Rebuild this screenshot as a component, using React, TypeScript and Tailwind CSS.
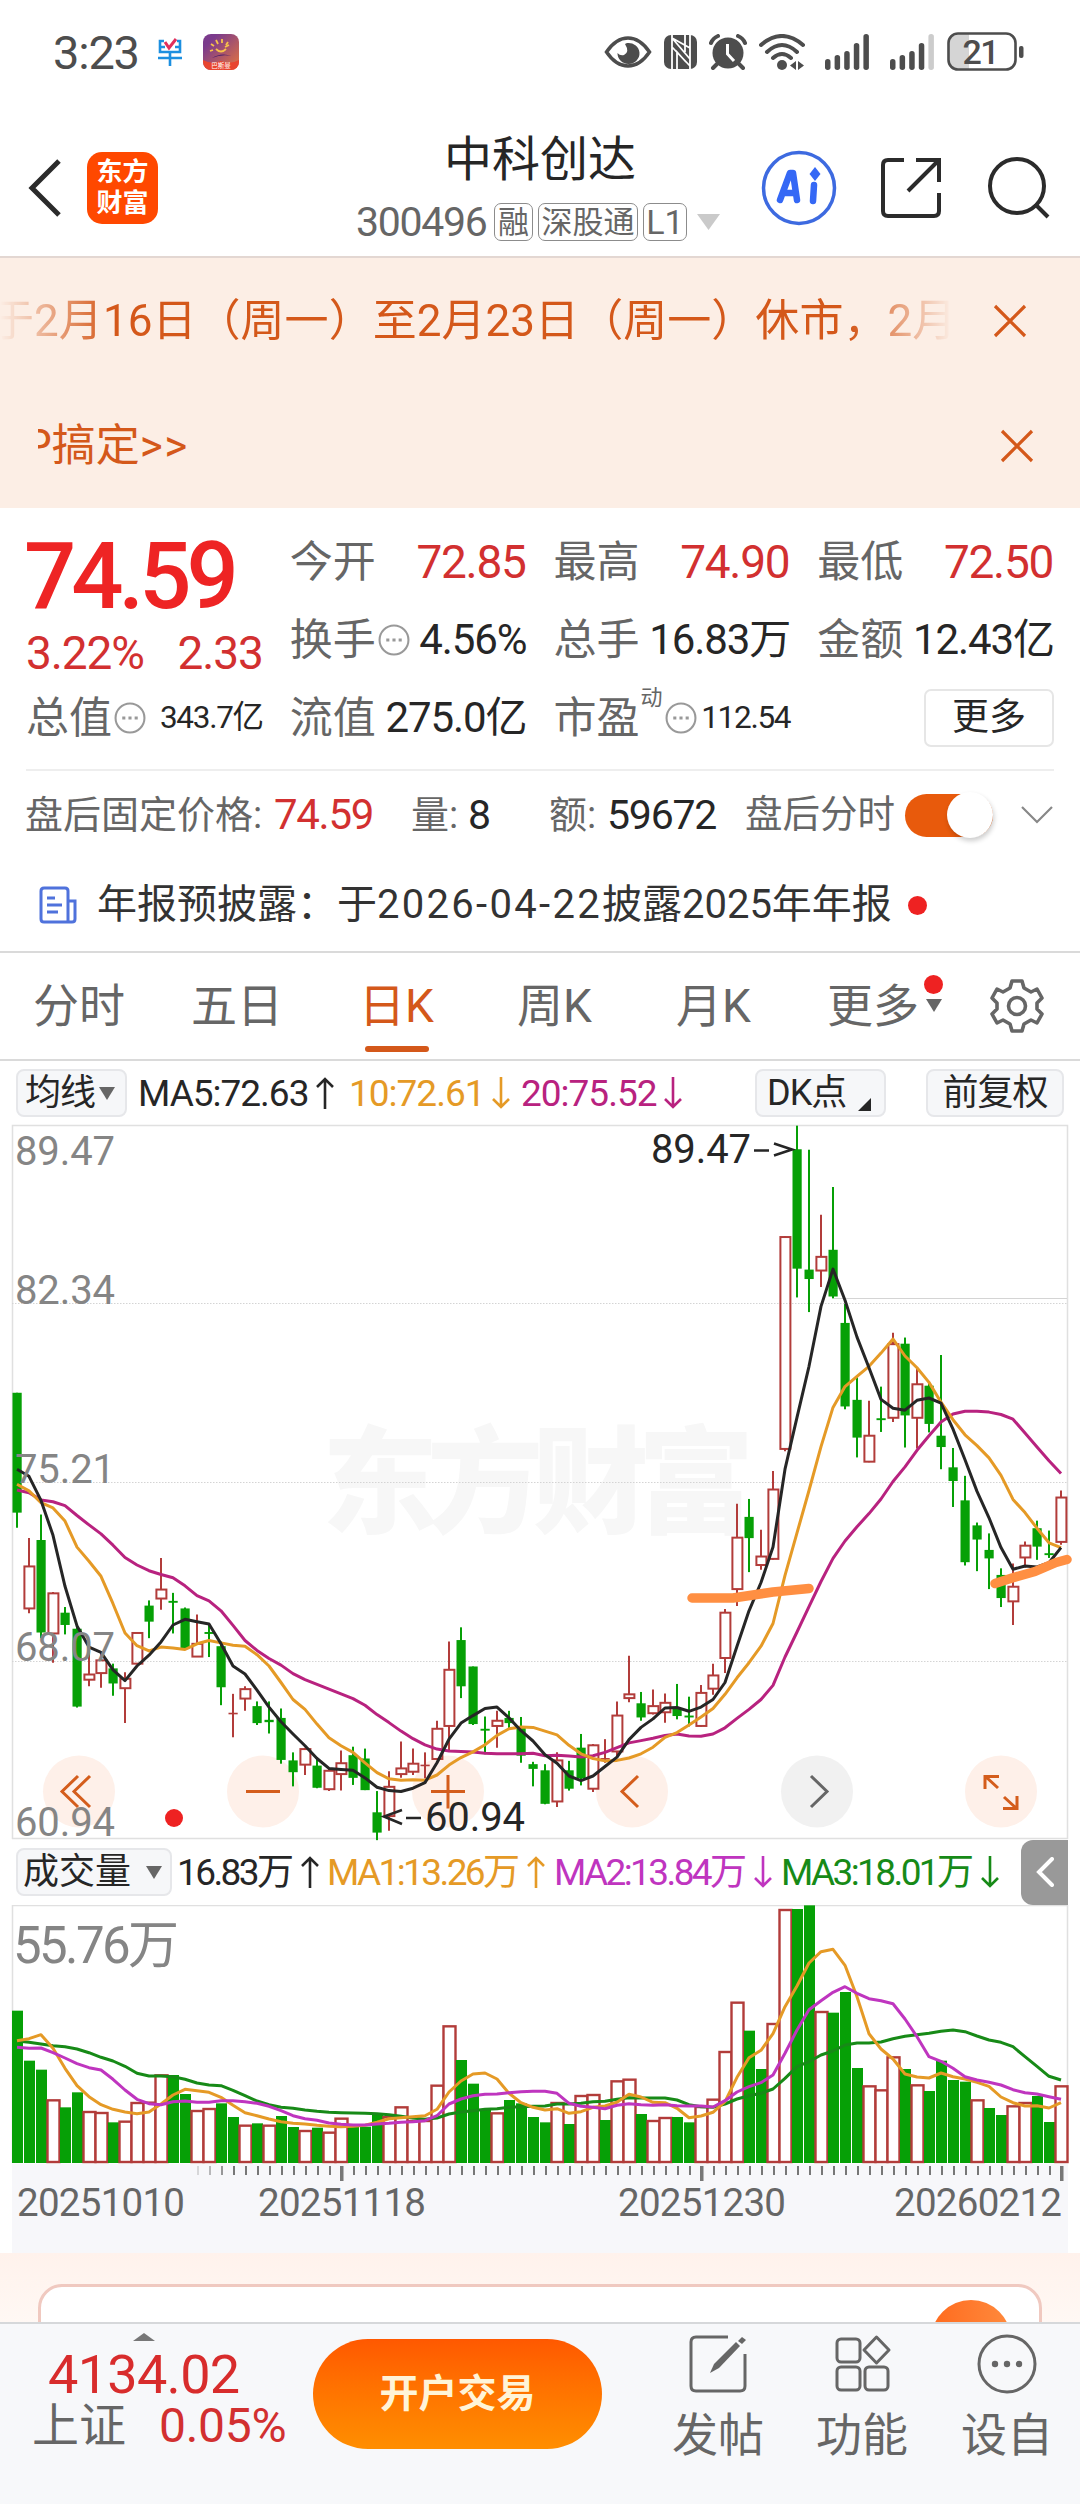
import { ReactNode } from 'react';
import clsx from 'clsx';

type Candle = [kind: 'r' | 'g', high: number, top: number, bottom: number, low: number];

const UP = '#b23c3a';
const DOWN = '#06a006';

// Daily candles, 12px apart, in chart units (see priceY)
const candles: Candle[] = [
	['g', 578, 578, 832, 864], ['r', 886, 946, 1035, 1045], ['g', 836, 890, 1086, 1098], ['r', 1000, 1003, 1088, 1150],
	['g', 1032, 1044, 1070, 1090], ['g', 1070, 1078, 1243, 1245], ['r', 1118, 1175, 1186, 1200], ['r', 1130, 1145, 1172, 1203],
	['g', 1152, 1162, 1194, 1220], ['r', 1170, 1184, 1204, 1278], ['r', 1085, 1087, 1152, 1154], ['g', 1018, 1029, 1063, 1098],
	['r', 928, 995, 1014, 1038], ['g', 1002, 1019, 1023, 1088], ['g', 1033, 1035, 1120, 1122], ['r', 1048, 1110, 1137, 1138],
	['g', 1070, 1085, 1089, 1138], ['g', 1105, 1115, 1202, 1240], ['r', 1216, 1256, 1257, 1308], ['r', 1200, 1206, 1226, 1252],
	['g', 1232, 1242, 1278, 1282], ['g', 1232, 1271, 1276, 1300], ['g', 1247, 1267, 1356, 1364], ['g', 1340, 1357, 1382, 1412],
	['r', 1330, 1333, 1366, 1388], ['g', 1350, 1368, 1415, 1416], ['r', 1375, 1379, 1418, 1422], ['r', 1336, 1363, 1386, 1421],
	['g', 1328, 1346, 1394, 1409], ['g', 1332, 1353, 1420, 1420], ['g', 1422, 1467, 1510, 1526], ['r', 1380, 1413, 1475, 1506],
	['r', 1317, 1374, 1386, 1394], ['r', 1332, 1364, 1381, 1388], ['r', 1340, 1366, 1368, 1395], ['r', 1273, 1290, 1354, 1355],
	['r', 1105, 1165, 1284, 1336], ['g', 1075, 1102, 1200, 1225], ['g', 1158, 1158, 1280, 1282], ['g', 1264, 1290, 1294, 1344],
	['r', 1252, 1273, 1284, 1330], ['g', 1252, 1267, 1278, 1290], ['g', 1265, 1286, 1347, 1362], ['g', 1360, 1365, 1375, 1412],
	['g', 1365, 1378, 1449, 1450], ['r', 1340, 1357, 1444, 1456], ['g', 1358, 1378, 1417, 1421], ['g', 1301, 1330, 1395, 1410],
	['r', 1322, 1325, 1417, 1424], ['r', 1312, 1352, 1354, 1362], ['r', 1232, 1262, 1338, 1350], ['r', 1135, 1217, 1225, 1234],
	['g', 1212, 1236, 1266, 1273], ['r', 1207, 1242, 1257, 1260], ['r', 1215, 1235, 1255, 1277], ['g', 1195, 1248, 1263, 1270],
	['g', 1222, 1262, 1266, 1285], ['r', 1197, 1214, 1284, 1286], ['r', 1152, 1177, 1205, 1218], ['r', 1036, 1044, 1140, 1172],
	['r', 813, 885, 994, 1030], ['g', 803, 841, 886, 958], ['r', 868, 925, 943, 953], ['r', 744, 783, 930, 932],
	['r', 246, 248, 697, 702], ['g', 12, 62, 315, 376], ['g', 63, 317, 337, 407], ['r', 201, 290, 319, 354],
	['g', 142, 275, 374, 378], ['g', 390, 430, 607, 613], ['g', 545, 593, 673, 715], ['r', 595, 669, 724, 725],
	['g', 565, 632, 636, 661], ['r', 451, 475, 631, 640], ['g', 461, 474, 626, 694], ['r', 526, 560, 631, 696],
	['g', 555, 563, 644, 662], ['g', 498, 669, 693, 740], ['g', 695, 736, 765, 820], ['g', 754, 806, 937, 944],
	['g', 853, 859, 889, 956], ['g', 876, 911, 929, 994], ['g', 950, 964, 1013, 1032], ['r', 940, 989, 1020, 1070],
	['r', 893, 902, 927, 948], ['g', 849, 865, 904, 932], ['g', 870, 918, 922, 928], ['r', 785, 800, 894, 900],
];

const ma5 = [
	740, 755, 806, 880, 988, 1072, 1117, 1128, 1165, 1188, 1157, 1134, 1106, 1070, 1058, 1063, 1068, 1110, 1157, 1174, 1208, 1244,
	1275, 1301, 1326, 1353, 1374, 1376, 1378, 1394, 1414, 1421, 1423, 1416, 1404, 1362, 1312, 1278, 1262, 1247, 1244, 1267, 1294,
	1316, 1345, 1363, 1390, 1400, 1390, 1370, 1350, 1313, 1287, 1269, 1246, 1245, 1253, 1244, 1228, 1192, 1115, 1040, 980, 905,
	740, 630, 522, 395, 316, 382, 460, 525, 592, 611, 615, 594, 589, 600, 655, 720, 787, 843, 906, 952, 945, 947, 938, 906,
];
const ma10 = [
	772, 786, 811, 822, 850, 905, 935, 967, 1025, 1087, 1114, 1125, 1117, 1119, 1122, 1110, 1103, 1108, 1113, 1115, 1133, 1157,
	1192, 1228, 1249, 1280, 1309, 1326, 1340, 1362, 1383, 1396, 1399, 1398, 1399, 1388, 1367, 1351, 1339, 1324, 1304, 1290, 1286,
	1287, 1295, 1303, 1325, 1343, 1353, 1358, 1357, 1352, 1343, 1329, 1308, 1298, 1282, 1265, 1247, 1217, 1182, 1150, 1115, 1067,
	965, 875, 785, 692, 609, 565, 543, 522, 494, 464, 500, 525, 556, 598, 635, 667, 690, 716, 753, 804, 832, 865, 896, 906,
];
const ma20 = [
	784, 790, 805, 809, 817, 838, 858, 877, 901, 927, 943, 955, 963, 970, 987, 1008, 1019, 1040, 1071, 1103, 1124, 1141, 1155,
	1173, 1186, 1196, 1206, 1216, 1226, 1240, 1260, 1277, 1295, 1311, 1324, 1333, 1337, 1338, 1339, 1342, 1343, 1343, 1343, 1342,
	1347, 1346, 1348, 1350, 1347, 1340, 1330, 1320, 1315, 1310, 1304, 1301, 1305, 1306, 1301, 1288, 1268, 1249, 1228, 1198, 1138,
	1085, 1031, 978, 929, 892, 862, 834, 803, 766, 735, 700, 669, 640, 623, 617, 617, 619, 624, 634, 663, 693, 722, 749,
];

const volumes =
	'g542 g692 g719 r808 g832 g787 r843 r846 g877 r872 r816 r815 r733 g735 g792 r840 r834 g820 g861 r884 g880 r884 g858 g891 r900 g893 r905 r863 g890 g890 g852 r858 r829 r870 r870 r764 r586 g690 g761 g839 r847 g810 g820 g861 g877 r816 g882 r795 r792 g870 r751 r746 g852 r870 r861 g861 g877 r828 r806 r663 r515 g602 g717 r579 r237 g237 g226 r543 g548 g486 g714 r766 r778 r679 g717 r763 g783 g692 g750 g755 r808 g834 g855 r826 r816 g798 g876 r766'.split(
		' '
	);
const vol5 = [
	632, 626, 614, 655, 715, 767, 800, 824, 838, 846, 851, 846, 822, 795, 778, 782, 787, 802, 826, 848, 857, 867, 875, 880, 882, 886,
	889, 890, 889, 886, 877, 866, 863, 860, 857, 838, 786, 753, 732, 729, 747, 790, 818, 832, 840, 836, 850, 845, 832, 828, 817, 793,
	801, 817, 818, 835, 863, 858, 847, 815, 742, 683, 661, 611, 530, 468, 399, 365, 358, 406, 500, 611, 657, 687, 732, 741, 744, 729,
	740, 747, 757, 769, 801, 818, 828, 827, 834, 818,
];
const vol10 = [
	652, 655, 654, 668, 684, 701, 713, 720, 748, 780, 808, 821, 824, 815, 813, 817, 817, 812, 812, 815, 820, 829, 842, 857, 866, 871,
	879, 883, 885, 885, 882, 880, 877, 875, 872, 857, 822, 807, 797, 793, 792, 788, 785, 784, 784, 790, 820, 829, 832, 836, 826, 821,
	824, 826, 824, 827, 828, 828, 831, 812, 786, 770, 758, 735, 670, 600, 539, 512, 487, 470, 490, 506, 512, 521, 567, 620, 680, 694,
	715, 740, 750, 757, 765, 779, 788, 792, 800, 808,
];
const vol20 = [
	633, 637, 642, 647, 650, 657, 668, 682, 693, 709, 730, 738, 738, 740, 748, 759, 765, 767, 781, 797, 813, 824, 832, 835, 840, 844,
	847, 848, 849, 850, 851, 854, 859, 864, 868, 864, 852, 846, 842, 838, 836, 832, 830, 829, 828, 822, 822, 820, 815, 814, 808, 803,
	804, 804, 804, 810, 824, 830, 832, 822, 807, 797, 790, 777, 745, 710, 695, 675, 663, 645, 639, 639, 636, 626, 619, 614, 610, 604,
	600, 605, 618, 630, 637, 650, 680, 709, 739, 750,
];

const slotX = (i: number) => 17 + i * 12;
const priceY = (v: number) => v / 2.119 - 4;
const volY = (v: number) => v / 3 - 75;
const toPoints = (values: number[], y: (v: number) => number) =>
	values.map((v, i) => `${slotX(i)},${y(v).toFixed(1)}`).join(' ');

const Line = ({ values, y, color }: { values: number[]; y: (v: number) => number; color: string }) => (
	<polyline points={toPoints(values, y)} fill="none" stroke={color} strokeWidth={3} strokeLinejoin="round" />
);

const CandleShape = ({ index, candle }: { index: number; candle: Candle }) => {
	const [kind, high, top, bottom, low] = candle;
	const x = slotX(index);
	const color = kind === 'r' ? UP : DOWN;
	const y1 = priceY(top);
	const y2 = priceY(bottom);
	const height = Math.max(y2 - y1, 1.6);

	if (kind === 'g' || height < 2) {
		return (
			<g fill={color}>
				<rect x={x - 1} y={priceY(high)} width={2} height={priceY(low) - priceY(high)} />
				<rect x={x - 4.5} y={y1} width={9.2} height={height} />
			</g>
		);
	}

	return (
		<g>
			<path d={`M${x} ${priceY(high)}V${y1}M${x} ${y2}V${priceY(low)}`} stroke={color} strokeWidth={2} />
			<rect x={x - 4.6} y={y1} width={10} height={height} fill="none" stroke={color} strokeWidth={2} />
		</g>
	);
};

const AxisLabel = ({ y, children }: { y: number; children: string }) => (
	<text x={15} y={y} fontSize={40} fill="#858585" textLength={100}>
		{children}
	</text>
);

const PriceChart = () => (
	<svg width={1080} height={714} viewBox="0 1 1080 714" className="block overflow-visible">
		<text
			x={322}
			y={400}
			fontSize={116}
			fontWeight={900}
			fill="#f7f7f7"
			textLength={432}
			className="font-['Noto_Sans_CJK_SC',sans-serif]"
		>
			东方财富
		</text>
		<path d="M12.5 715V1.5H1067.5V715" fill="none" stroke="#e0e0e0" strokeWidth={1.5} />
		<path d="M12 714.5H1068" stroke="#e0e0e0" strokeWidth={1.5} />
		<path d="M12 179.5H1067M12 358.5H1067M12 537.5H1067" stroke="#d4d4d4" strokeDasharray="1.5 1.5" />
		<path d="M834 174.5H1067" stroke="#d4d4d4" />

		{[79, 263, 448, 632, 1001].map((cx) => (
			<circle key={cx} cx={cx} cy={667.5} r={36} fill="#fef0e9" />
		))}
		<circle cx={817} cy={667.5} r={36} fill="#f1f1f1" />

		{candles.map((candle, i) => (
			<CandleShape key={i} index={i} candle={candle} />
		))}
		<Line values={ma20} y={priceY} color="#b8227f" />
		<Line values={ma10} y={priceY} color="#e59a26" />
		<Line values={ma5} y={priceY} color="#262626" />

		<g fill="none" stroke="#ff8f42" strokeWidth={9.5} strokeLinecap="round" strokeLinejoin="round">
			<path d="M692 474H733L773 468L809 464.5" />
			<path d="M995 459.5L1012 454L1035 447.5L1056 438.5L1067 435.5" />
		</g>

		<g fill="none" stroke="#d45d1c" strokeWidth={3}>
			<path d="M78 652L62 667.5L78 683M90 652L74 667.5L90 683" />
			<path d="M246 667.5H280M431 667.5H465M448 651V684.5M638 652L622 667.5L638 683" />
			<path d="M985 665V652.5H999M986 653L998 664M1017 672V684.5H1003M1016 684L1004 673" />
		</g>
		<path d="M811 652L827 667.5L811 683" fill="none" stroke="#666" strokeWidth={3} />
		<circle cx={174} cy={694} r={9} fill="#ee2222" />

		<AxisLabel y={41}>89.47</AxisLabel>
		<AxisLabel y={180}>82.34</AxisLabel>
		<AxisLabel y={359}>75.21</AxisLabel>
		<AxisLabel y={537}>68.07</AxisLabel>
		<AxisLabel y={712}>60.94</AxisLabel>
		<text x={651} y={39} fontSize={40} fill="#262626" textLength={100}>
			89.47
		</text>
		<text x={425} y={707} fontSize={40} fill="#262626" textLength={100}>
			60.94
		</text>
		<path
			d="M754 26.5H769M774 19.5L792 25.5L774 31.5M421 694H406M402 686L384 692.5L402 700"
			fill="none"
			stroke="#262626"
			strokeWidth={2.6}
		/>
	</svg>
);

const VolumeChart = () => (
	<svg width={1080} height={348} viewBox="0 0 1080 348" className="block">
		<path d="M12.5 258V.5H1067.5V258" fill="none" stroke="#e0e0e0" strokeWidth={1.5} />
		<rect x={12} y={258.5} width={1056} height={90} fill="#f7f7fa" />
		<text x={13} y={58} fontSize={51} fill="#858585" textLength={166}>
			55.76万
		</text>
		{volumes.map((bar, i) => {
			const x = slotX(i);
			const y = volY(Number(bar.slice(1)));
			return bar[0] === 'g' ? (
				<rect key={i} x={x - 5} y={y} width={11} height={258 - y} fill={DOWN} />
			) : (
				<rect key={i} x={x - 5.5} y={y + 1} width={12} height={256 - y} fill="#fff" stroke={UP} strokeWidth={2.4} />
			);
		})}
		<Line values={vol20} y={volY} color="#178a17" />
		<Line values={vol5} y={volY} color="#e59a26" />
		<Line values={vol10} y={volY} color="#bf35bf" />
		{Array.from({ length: 73 }, (_, i) => {
			const major = i === 12 || i === 42 || i === 72;
			return (
				<rect
					key={i}
					x={198 + i * 12 - (major ? 2 : 1)}
					y={261}
					width={major ? 3.5 : 2}
					height={major ? 15 : 9}
					fill="#777"
					opacity={Math.min(1, 0.25 + i * 0.25)}
				/>
			);
		})}
		<g fontSize={38.5} fill="#666">
			<text x={17} y={311} textLength={168}>20251010</text>
			<text x={258} y={311} textLength={168}>20251118</text>
			<text x={618} y={311} textLength={168}>20251230</text>
			<text x={894} y={311} textLength={168}>20260212</text>
		</g>
	</svg>
);

const Signal = ({ bars, className }: { bars: number; className: string }) => (
	<svg width={45} height={36} viewBox="0 0 45 36" className={className}>
		{[11, 15, 19, 27, 36].map((h, i) => (
			<rect key={i} x={i * 9.6} y={36 - h} width={5.5} height={h} rx={2.7} fill={i < bars ? 'currentColor' : '#cccccc'} />
		))}
	</svg>
);

const StatusBar = () => (
	<div className="flex h-[104px] items-center pl-[53px] text-[#4d4d4d]">
		<span className="w-[105px] text-[47px] tracking-[-1.2px]">3:23</span>
		<svg width={24} height={28} viewBox="0 0 24 28" fill="none" strokeWidth={2.6}>
			<path d="M6 3H2V14H22V3H19M2 9H7M17 9H22M12 14V28M0 20H24" stroke="#1c8fe0" />
			<path d="M7 4L11 10L18 1" stroke="#e0305c" strokeWidth={3} />
		</svg>
		<svg width={36} height={36} viewBox="0 0 36 36" className="ml-[21px]">
			<defs>
				<linearGradient id="app" x1="0" y1="0" x2="1" y2="1">
					<stop offset="0.2" stopColor="#7b3b8c" />
					<stop offset="1" stopColor="#e8773c" />
				</linearGradient>
				<clipPath id="appClip">
					<rect width={36} height={36} rx={8} />
				</clipPath>
			</defs>
			<g clipPath="url(#appClip)">
				<rect width={36} height={36} fill="url(#app)" />
				<path d="M0 26Q9 31 18 27Q27 31 36 26V36H0Z" fill="#e8452f" />
				<path
					d="M13 15Q18 20 23 15M7 17L10 16M8 10L11 12M13 6L15 10M19 5V9M25 8L23 11M22 13L26 11"
					stroke="#f8c24a"
					strokeWidth={1.8}
					fill="none"
				/>
				<path d="M9 24Q18 18 29 22Q18 20 9 24Z" fill="#4b1f6b" />
			</g>
			<text x={18} y={34} fontSize={6.5} textAnchor="middle" fill="#fff">
				巴斯曼
			</text>
		</svg>
		<svg width={48} height={32} viewBox="0 0 48 32" className="ml-[365px]">
			<path d="M2.5 16Q12 2 24 2T45.5 16Q36 30 24 30T2.5 16Z" fill="none" stroke="currentColor" strokeWidth={3.5} />
			<path d="M23 7A11 10.5 0 1 1 13.5 17Q16 20 20 19Q26 16 21 8Z" fill="currentColor" />
		</svg>
		<svg width={33} height={34} viewBox="0 0 33 34" className="ml-[12px]">
			<rect width={33} height={34} rx={7} fill="currentColor" />
			<path d="M8 0V34M26 0V34M8 3L26 13M8 3L26 24M8 12L26 31M13 34V17L22 27M21 0V17" fill="none" stroke="#fff" strokeWidth={1.8} />
		</svg>
		<svg width={38} height={36} viewBox="0 0 38 36" className="ml-[12px]">
			<circle cx={19} cy={19} r={15.5} fill="currentColor" />
			<path d="M2 9Q4 4 9 2M29 2Q34 4 36 9M8 30L4 34M30 30L34 34" fill="none" stroke="currentColor" strokeWidth={4} strokeLinecap="round" />
			<path d="M18.5 10V20L25 27" fill="none" stroke="#fff" strokeWidth={3} />
		</svg>
		<svg width={46} height={36} viewBox="0 0 46 36" className="ml-[12px]">
			<g fill="none" stroke="currentColor" strokeWidth={4} strokeLinecap="round">
				<path d="M2 11Q23 -7 44 11M8 18Q23 4 38 18M14 24Q23 16 32 24" />
			</g>
			<circle cx={23} cy={31} r={5} fill="currentColor" />
			<path d="M37 27V36L31 31.5ZM39 27V36L45 31.5Z" fill="currentColor" />
		</svg>
		<Signal bars={5} className="ml-[20px]" />
		<Signal bars={4} className="ml-[20px]" />
		<svg width={77} height={40} viewBox="0 0 77 40" className="ml-[12px]">
			<path d="M22 2H12Q2 2 2 12V28Q2 38 12 38H22Z" fill="#d5d5d5" />
			<rect x={1.5} y={1.5} width={67} height={36} rx={9.5} fill="none" stroke="currentColor" strokeWidth={2.6} />
			<rect x={72} y={14} width={4.5} height={12} rx={2} fill="currentColor" />
			<text x={15.5} y={32} fontSize={34} fontWeight={500} fill="currentColor" textLength={37}>
				21
			</text>
		</svg>
	</div>
);

const Tag = ({ children, className }: { children: ReactNode; className: string }) => (
	<span className={clsx('flex h-[38px] items-center justify-center rounded-[7px] border-[1.5px] border-[#8c8c8c]', className)}>
		{children}
	</span>
);

const Header = () => (
	<header className="flex h-[154px] items-center border-b-2 border-[#e3d7d2] pt-[16px]">
		<svg width={34} height={58} viewBox="0 0 34 58" className="ml-[28px]" fill="none" stroke="#2b2b2b" strokeWidth={5}>
			<path d="M31 2L4 29L31 56" />
		</svg>
		<div className="ml-[25px] flex h-[72px] w-[71px] flex-col items-center justify-center rounded-[15px] bg-[#ff4800] text-[26px] font-bold leading-[31px] text-white">
			<span>东方</span>
			<span>财富</span>
		</div>
		<div className="ml-[188px] mt-[6px] flex w-[388px] flex-col items-center">
			<h1 className="text-[48px] leading-[62px] text-[#262626]">中科创达</h1>
			<div className="flex h-[62px] items-center self-start pl-[10px] text-[#666]">
				<span className="w-[138px] text-[41px] tracking-[-1.3px]">300496</span>
				<Tag className="w-[39px] text-[31px]">融</Tag>
				<Tag className="ml-[5px] w-[100px] text-[31px]">深股通</Tag>
				<Tag className="ml-[5px] w-[44px] text-[34px]">L1</Tag>
				<svg width={23} height={16} viewBox="0 0 23 16" className="ml-[10px]">
					<path d="M0 0H23L11.5 16Z" fill="#cacaca" />
				</svg>
			</div>
		</div>
		<svg width={76} height={76} viewBox="0 0 76 76" className="ml-[27px]">
			<circle cx={38} cy={38} r={35.5} fill="none" stroke="#3d6ae0" strokeWidth={3.5} />
			<path d="M19 50L29 23H32L36 50M22 43H35M53 35L52 51" fill="none" stroke="#3568f5" strokeWidth={6.5} strokeLinecap="round" strokeLinejoin="round" />
			<path d="M54 17L59.5 24L54 31L48.5 24Z" fill="#3568f5" />
		</svg>
		<svg width={62} height={62} viewBox="0 0 62 62" className="ml-[43px]" fill="none" stroke="#2b2b2b" strokeWidth={4}>
			<path d="M24 3H8Q3 3 3 8V54Q3 59 8 59H54Q59 59 59 54V36M36 3H59V25M59 3L28 34" />
		</svg>
		<svg width={64} height={64} viewBox="0 0 64 64" className="ml-[45px]" fill="none" stroke="#2b2b2b" strokeWidth={4}>
			<circle cx={30} cy={30} r={27} />
			<path d="M48 48L61 61" />
		</svg>
	</header>
);

const CloseIcon = ({ className }: { className: string }) => (
	<svg width={34} height={34} viewBox="0 0 34 34" className={className} stroke="#d4581a" strokeWidth={3.2}>
		<path d="M2 2L32 32M32 2L2 32" />
	</svg>
);

const Notices = () => (
	<section className="h-[250px] bg-[#fceee5] text-[44px] text-[#d4581a]">
		<div className="flex h-[125px] items-center">
			<div className="w-[952px] overflow-hidden whitespace-nowrap leading-[60px] [mask-image:linear-gradient(90deg,transparent,#000_110px,#000_850px,transparent)]">
				<span className="-ml-[10px] tracking-[0.05px]">于2月16日（周一）至2月23日（周一）休市，2月23日起照常开市</span>
			</div>
			<CloseIcon className="ml-[41px]" />
		</div>
		<div className="flex h-[125px] items-center">
			<div className="ml-[38px] w-[952px] overflow-hidden whitespace-nowrap leading-[60px]">
				<span className="-ml-[14px]">
					P搞定<span className="tracking-[1.5px]">&gt;&gt;</span>
				</span>
			</div>
			<CloseIcon className="ml-[10px]" />
		</div>
	</section>
);

const Dots = () => (
	<svg width={32} height={32} viewBox="0 0 31 31" className="ml-[2px] shrink-0">
		<circle cx={15.5} cy={15.5} r={14} fill="none" stroke="#999" strokeWidth={2} />
		<path d="M8 15.5h3M14 15.5h3M20 15.5h3" stroke="#999" strokeWidth={3} />
	</svg>
);

interface QuoteProps {
	label: string;
	value: string;
	size?: 'price' | 'normal' | 'small';
	info?: boolean;
	sup?: string;
}

const Quote = ({ label, value, size = 'normal', info, sup }: QuoteProps) => (
	<div className="flex items-center whitespace-nowrap">
		<span className="text-[43px] text-[#666]">{label}</span>
		{sup && <span className="-mt-[40px] ml-[1px] text-[22px] text-[#666]">{sup}</span>}
		{info && <Dots />}
		<span
			className={clsx(
				'ml-auto',
				size === 'price' && 'mr-[1px] text-[46px] tracking-[-1.3px] text-[#d23030]',
				size === 'normal' && 'text-[42px] tracking-[-1.1px] text-[#262626]',
				size === 'small' && 'text-[31.5px] tracking-[-1.3px] text-[#262626]'
			)}
		>
			{value}
		</span>
	</div>
);

const Quotes = () => (
	<section className="mx-[26px] border-b-2 border-[#eeeeee] pb-[12px] pt-[15px]">
		<div className="grid auto-rows-[78px] grid-cols-4 gap-x-[27px]">
			<div className="row-span-2 flex flex-col">
				<span className="-ml-[2px] h-[106px] text-[92px] font-medium leading-[107px] tracking-[-5px] text-[#ee2424]">74.59</span>
				<div className="flex justify-between whitespace-nowrap text-[46px] leading-[48px] tracking-[-1.1px] text-[#d23030]">
					<span>3.22%</span>
					<span>2.33</span>
				</div>
			</div>
			<Quote label="今开" value="72.85" size="price" />
			<Quote label="最高" value="74.90" size="price" />
			<Quote label="最低" value="72.50" size="price" />
			<Quote label="换手" value="4.56%" info />
			<Quote label="总手" value="16.83万" />
			<Quote label="金额" value="12.43亿" />
			<Quote label="总值" value="343.7亿" info size="small" />
			<Quote label="流值" value="275.0亿" />
			<Quote label="市盈" value="112.54" sup="动" info size="small" />
			<button className="h-[58px] w-[130px] self-center justify-self-end rounded-[7px] border-2 border-[#e6e6e6] text-[37px] leading-[50px] text-[#262626]">
				更多
			</button>
		</div>
	</section>
);

const AfterHours = () => (
	<section className="flex h-[88px] items-center whitespace-nowrap pl-[25px] text-[38px] text-[#666]">
		<span className="w-[249px]">盘后固定价格:</span>
		<span className="w-[137px] text-[42px] tracking-[-1.3px] text-[#d23030]">74.59</span>
		<span className="w-[57px]">量:</span>
		<span className="w-[81px] text-[41px] text-[#262626]">8</span>
		<span className="w-[58px]">额:</span>
		<span className="w-[138px] text-[41px] tracking-[-1.2px] text-[#262626]">59672</span>
		<span className="w-[160px] text-[37.5px]">盘后分时</span>
		<div className="flex h-[43px] w-[88px] items-center justify-end rounded-full bg-[#e85a0c]">
			<div className="h-[46px] w-[46px] rounded-full bg-white shadow-[1px_3px_5px_rgba(0,0,0,0.2)]" />
		</div>
		<svg width={32} height={20} viewBox="0 0 32 20" className="ml-[28px]" fill="none" stroke="#888" strokeWidth={2.2}>
			<path d="M1 2L16 17L31 2" />
		</svg>
	</section>
);

const Report = () => (
	<section className="flex h-[94px] items-center whitespace-nowrap border-b-2 border-[#dadada] pl-[39px]">
		<svg width={38} height={38} viewBox="0 0 38 38" fill="none" stroke="#4f72dc" strokeWidth={3}>
			<path d="M29 36H5Q2 36 2 33V5Q2 2 5 2H26Q29 2 29 5V36H33Q36 36 36 33V15H29M8 12H16M8 19H23M8 26H19" />
		</svg>
		<p className="ml-[20px] text-[40px] text-[#333]">
			年报预披露：于<span className="tracking-[2.3px]">2026-04-22</span>披露2025年年报
		</p>
		<span className="ml-[16px] h-[19px] w-[19px] rounded-full bg-[#ee2222]" />
	</section>
);

const Triangle = ({ className }: { className: string }) => (
	<svg width={16} height={13} viewBox="0 0 16 13" className={className}>
		<path d="M0 0H16L8 13Z" fill="#666" />
	</svg>
);

const Tabs = () => (
	<nav className="flex h-[108px] items-center whitespace-nowrap border-b-2 border-[#dadada] pl-[33px] text-[46px] text-[#666]">
		<span className="w-[158px]">分时</span>
		<span className="w-[168px]">五日</span>
		<span className="relative w-[158px] text-[#d4581a]">
			日K
			<span className="absolute left-[6px] top-[63px] h-[6px] w-[64px] rounded-full bg-[#d4581a]" />
		</span>
		<span className="w-[159px]">周K</span>
		<span className="w-[151px]">月K</span>
		<span className="relative w-[163px]">
			更多
			<span className="absolute left-[97px] top-[-8px] h-[19px] w-[19px] rounded-full bg-[#ee2222]" />
			<Triangle className="absolute left-[99px] top-[16px]" />
		</span>
		<svg width={54} height={54} viewBox="0 0 54 54" fill="none" stroke="#666" strokeWidth={3.6} strokeLinejoin="round">
			<path d="M22 2H32L34 9L41 13L47 10L52 19L47 24V30L52 35L47 44L41 41L34 45L32 52H22L20 45L13 41L7 44L2 35L7 30V24L2 19L7 10L13 13L20 9Z" />
			<circle cx={27} cy={27} r={8.5} />
		</svg>
	</nav>
);

const Arrow = ({ up, className }: { up?: boolean; className?: string }) => (
	<svg width={20} height={32} viewBox="0 0 20 32" className={clsx('shrink-0', className)} fill="none" stroke="currentColor" strokeWidth={2.6}>
		<path d={up ? 'M10 32V2M2 10L10 2L18 10' : 'M10 0V30M2 22L10 30L18 22'} />
	</svg>
);

const Chip = ({ children, className }: { children: ReactNode; className: string }) => (
	<div className={clsx('flex h-[48px] items-center rounded-[8px] border-2 border-[#e6e7ea] bg-[#f6f7f9] text-[36px] text-[#262626]', className)}>
		{children}
	</div>
);

const AverageBar = () => (
	<div className="flex h-[64px] items-center whitespace-nowrap pl-[16px] text-[37px] tracking-[-1px] text-[#262626]">
		<Chip className="w-[111px] pl-[7px]">
			均线
			<Triangle className="ml-[4px]" />
		</Chip>
		<div className="ml-[11px] flex w-[211px] items-center">
			MA5:72.63
			<Arrow up className="ml-[7px]" />
		</div>
		<div className="flex w-[172px] items-center text-[#e59a26]">
			10:72.61
			<Arrow className="ml-[7px]" />
		</div>
		<div className="flex w-[234px] items-center text-[#b8227f]">
			20:75.52
			<Arrow className="ml-[7px]" />
		</div>
		<Chip className="w-[131px] pl-[10px]">
			DK点
			<svg width={13} height={13} viewBox="0 0 13 13" className="ml-[12px] mt-[22px]">
				<path d="M13 0V13H0Z" fill="#262626" />
			</svg>
		</Chip>
		<Chip className="ml-[40px] w-[138px] justify-center">前复权</Chip>
	</div>
);

const VolumeBar = () => (
	<div className="flex h-[66px] items-center whitespace-nowrap pl-[16px] text-[37px] tracking-[-2.6px] text-[#262626]">
		<Chip className="w-[156px] pl-[5px] tracking-normal">
			成交量
			<Triangle className="ml-[15px]" />
		</Chip>
		<div className="ml-[5px] flex w-[150px] items-center">
			16.83万
			<Arrow up className="ml-[9px]" />
		</div>
		<div className="flex w-[227px] items-center text-[#e59a26]">
			MA1:13.26万
			<Arrow up className="ml-[9px]" />
		</div>
		<div className="flex w-[227px] items-center text-[#bf35bf]">
			MA2:13.84万
			<Arrow className="ml-[9px]" />
		</div>
		<div className="flex w-[240px] items-center text-[#178a17]">
			MA3:18.01万
			<Arrow className="ml-[9px]" />
		</div>
		<div className="flex h-[65px] w-[47px] items-center justify-center rounded-l-[12px] bg-[#999]">
			<svg width={18} height={30} viewBox="0 0 18 30" fill="none" stroke="#fff" strokeWidth={4} strokeLinecap="round">
				<path d="M16 2L3 15L16 28" />
			</svg>
		</div>
	</div>
);

const Promo = () => (
	<section className="h-[69px] overflow-hidden bg-gradient-to-b from-[#fff2ec] to-[#fff8f4] px-[38px] pt-[31px]">
		<div className="flex h-[120px] justify-end rounded-[24px] border-[3px] border-[#f0c9c0] bg-white pr-[28px] pt-[13px]">
			<div className="h-[80px] w-[80px] rounded-full bg-gradient-to-r from-[#ff6a1c] to-[#ff8a3c]" />
		</div>
	</section>
);

const Action = ({ label, className, children }: { label: string; className: string; children: ReactNode }) => (
	<div className={clsx('flex flex-col items-center text-[46px] text-[#666]', className)}>
		<svg width={60} height={60} viewBox="0 0 60 60" fill="none" stroke="#666" strokeWidth={3}>
			{children}
		</svg>
		<span className="mt-[18px]">{label}</span>
	</div>
);

const BottomBar = () => (
	<footer className="flex h-[182px] items-start whitespace-nowrap border-t-2 border-[#d6d8da] bg-[#f7f8fa]">
		<div className="w-[313px] pt-[9px]">
			<svg width={22} height={8} viewBox="0 0 22 8" className="ml-[133px] block">
				<path d="M11 0L22 8H0Z" fill="#777" />
			</svg>
			<div className="ml-[48px] mt-[8px] text-[54px] leading-[52px] tracking-[-0.7px] text-[#d82c2c]">4134.02</div>
			<div className="flex items-center pl-[32px] text-[47px] leading-[49px]">
				<span className="w-[127px] text-[#666]">上证</span>
				<span className="text-[48px] tracking-[-0.3px] text-[#d23030]">0.05%</span>
			</div>
		</div>
		<button className="mt-[15px] h-[110px] w-[289px] rounded-full bg-gradient-to-b from-[#ff5800] to-[#ff8e00] text-[39px] font-bold text-[#fff4d8]">
			开户交易
		</button>
		<Action label="发帖" className="ml-[68px] mt-[10px] w-[96px]">
			<path d="M40 3H8Q3 3 3 8V52Q3 57 8 57H52Q57 57 57 52V20" />
			<path d="M22 39L26 30L48 8L52 12L31 34Z" fill="#666" stroke="none" />
			<path d="M50 7L54 3L58 6L54 10Z" fill="#666" stroke="none" />
		</Action>
		<Action label="功能" className="ml-[48px] mt-[10px] w-[96px]">
			<rect x={5} y={5} width={23} height={23} rx={4} />
			<rect x={5} y={33} width={23} height={23} rx={4} />
			<rect x={33} y={33} width={23} height={23} rx={4} />
			<path d="M44.5 3L57 16L44.5 29L32 16Z" strokeLinejoin="round" />
		</Action>
		<Action label="设自" className="ml-[49px] mt-[10px] w-[96px]">
			<circle cx={30} cy={30} r={28} />
			<g fill="#666" stroke="none">
				<circle cx={18} cy={30} r={3.2} />
				<circle cx={30} cy={30} r={3.2} />
				<circle cx={42} cy={30} r={3.2} />
			</g>
		</Action>
	</footer>
);

export default function App() {
	return (
		<div className="h-[2504px] w-[1080px] overflow-hidden bg-white font-[Roboto,'Noto_Sans_CJK_SC',sans-serif] leading-none">
			<StatusBar />
			<Header />
			<Notices />
			<Quotes />
			<AfterHours />
			<Report />
			<Tabs />
			<AverageBar />
			<PriceChart />
			<VolumeBar />
			<VolumeChart />
			<Promo />
			<BottomBar />
		</div>
	);
}
